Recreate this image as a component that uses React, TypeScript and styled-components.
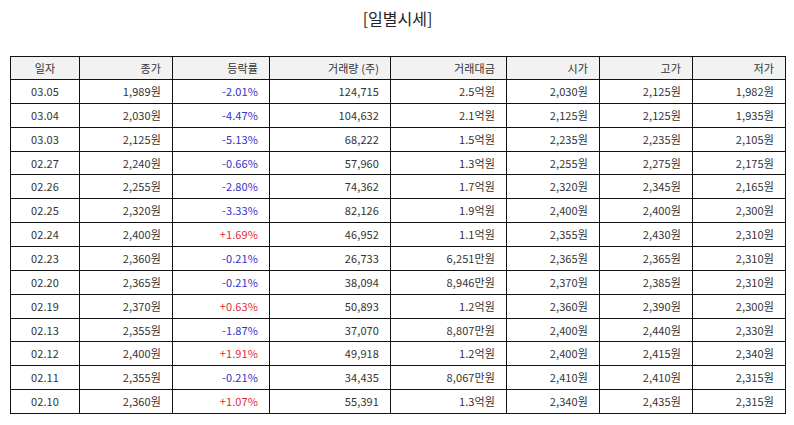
import React from "react";
import styled, { createGlobalStyle } from "styled-components";

type Row = {
  date: string;
  close: string;
  rate: string;
  volume: string;
  amount: string;
  open: string;
  high: string;
  low: string;
};

const rows: Row[] = [
  { date: "03.05", close: "1,989원", rate: "-2.01%", volume: "124,715", amount: "2.5억원", open: "2,030원", high: "2,125원", low: "1,982원" },
  { date: "03.04", close: "2,030원", rate: "-4.47%", volume: "104,632", amount: "2.1억원", open: "2,125원", high: "2,125원", low: "1,935원" },
  { date: "03.03", close: "2,125원", rate: "-5.13%", volume: "68,222", amount: "1.5억원", open: "2,235원", high: "2,235원", low: "2,105원" },
  { date: "02.27", close: "2,240원", rate: "-0.66%", volume: "57,960", amount: "1.3억원", open: "2,255원", high: "2,275원", low: "2,175원" },
  { date: "02.26", close: "2,255원", rate: "-2.80%", volume: "74,362", amount: "1.7억원", open: "2,320원", high: "2,345원", low: "2,165원" },
  { date: "02.25", close: "2,320원", rate: "-3.33%", volume: "82,126", amount: "1.9억원", open: "2,400원", high: "2,400원", low: "2,300원" },
  { date: "02.24", close: "2,400원", rate: "+1.69%", volume: "46,952", amount: "1.1억원", open: "2,355원", high: "2,430원", low: "2,310원" },
  { date: "02.23", close: "2,360원", rate: "-0.21%", volume: "26,733", amount: "6,251만원", open: "2,365원", high: "2,365원", low: "2,310원" },
  { date: "02.20", close: "2,365원", rate: "-0.21%", volume: "38,094", amount: "8,946만원", open: "2,370원", high: "2,385원", low: "2,310원" },
  { date: "02.19", close: "2,370원", rate: "+0.63%", volume: "50,893", amount: "1.2억원", open: "2,360원", high: "2,390원", low: "2,300원" },
  { date: "02.13", close: "2,355원", rate: "-1.87%", volume: "37,070", amount: "8,807만원", open: "2,400원", high: "2,440원", low: "2,330원" },
  { date: "02.12", close: "2,400원", rate: "+1.91%", volume: "49,918", amount: "1.2억원", open: "2,400원", high: "2,415원", low: "2,340원" },
  { date: "02.11", close: "2,355원", rate: "-0.21%", volume: "34,435", amount: "8,067만원", open: "2,410원", high: "2,410원", low: "2,315원" },
  { date: "02.10", close: "2,360원", rate: "+1.07%", volume: "55,391", amount: "1.3억원", open: "2,340원", high: "2,435원", low: "2,315원" },
];

const columns = [
  { label: "일자", width: 69 },
  { label: "종가", width: 93 },
  { label: "등락률", width: 97 },
  { label: "거래량 (주)", width: 121 },
  { label: "거래대금", width: 116 },
  { label: "시가", width: 93 },
  { label: "고가", width: 93 },
  { label: "저가", width: 93 },
];

const GlobalStyle = createGlobalStyle`
  html, body {
    margin: 0;
    padding: 0;
    background: #ffffff;
  }
  body {
    font-family: "Noto Sans CJK KR", "Noto Sans", "Liberation Sans", sans-serif;
    color: #222;
  }
`;

export default function App() {
  return (
    <>
      <GlobalStyle />
      <Page>
        <Title>[일별시세]</Title>
        <Table>
          <colgroup>
            {columns.map((c) => (
              <col key={c.label} style={{ width: c.width }} />
            ))}
          </colgroup>
          <thead>
            <tr>
              {columns.map((c, i) => (
                <HeadCell key={c.label} $center={i === 0}>
                  {c.label}
                </HeadCell>
              ))}
            </tr>
          </thead>
          <tbody>
            {rows.map((r) => (
              <tr key={r.date}>
                <Cell $center>{r.date}</Cell>
                <Cell>{r.close}</Cell>
                <RateCell $up={r.rate.startsWith("+")}>{r.rate}</RateCell>
                <Cell>{r.volume}</Cell>
                <Cell>{r.amount}</Cell>
                <Cell>{r.open}</Cell>
                <Cell>{r.high}</Cell>
                <Cell>{r.low}</Cell>
              </tr>
            ))}
          </tbody>
        </Table>
      </Page>
    </>
  );
}

const Page = styled.div`
  width: 794px;
  height: 425px;
  padding: 0 9px 0 10px;
  box-sizing: border-box;
  display: flex;
  flex-direction: column;
  align-items: stretch;
`;

const Title = styled.h1`
  margin: 6px 0 0;
  height: 50px;
  font-size: 16px;
  font-weight: 400;
  line-height: 24px;
  text-align: center;
  color: #222;
`;

const Table = styled.table`
  width: 775px;
  border-collapse: collapse;
  table-layout: fixed;
  font-size: 11px;
  letter-spacing: 0.1px;
`;

const Cell = styled.td<{ $center?: boolean }>`
  height: 22.86px;
  padding: 0 11px 0 6px;
  border: 1px solid #111;
  text-align: ${({ $center }) => ($center ? "center" : "right")};
  ${({ $center }) => ($center ? "padding: 0;" : "")}
  color: #333;
  white-space: nowrap;
  line-height: 1;
`;

const HeadCell = styled.th<{ $center?: boolean }>`
  height: 22px;
  padding: 0 11px 0 6px;
  border: 1px solid #111;
  background: #f2f2f2;
  font-weight: 400;
  text-align: ${({ $center }) => ($center ? "center" : "right")};
  ${({ $center }) => ($center ? "padding: 0;" : "")}
  color: #333;
  white-space: nowrap;
  line-height: 1;
`;

const RateCell = styled(Cell)<{ $up: boolean }>`
  color: ${({ $up }) => ($up ? "#e22a3a" : "#3333cc")};
`;
